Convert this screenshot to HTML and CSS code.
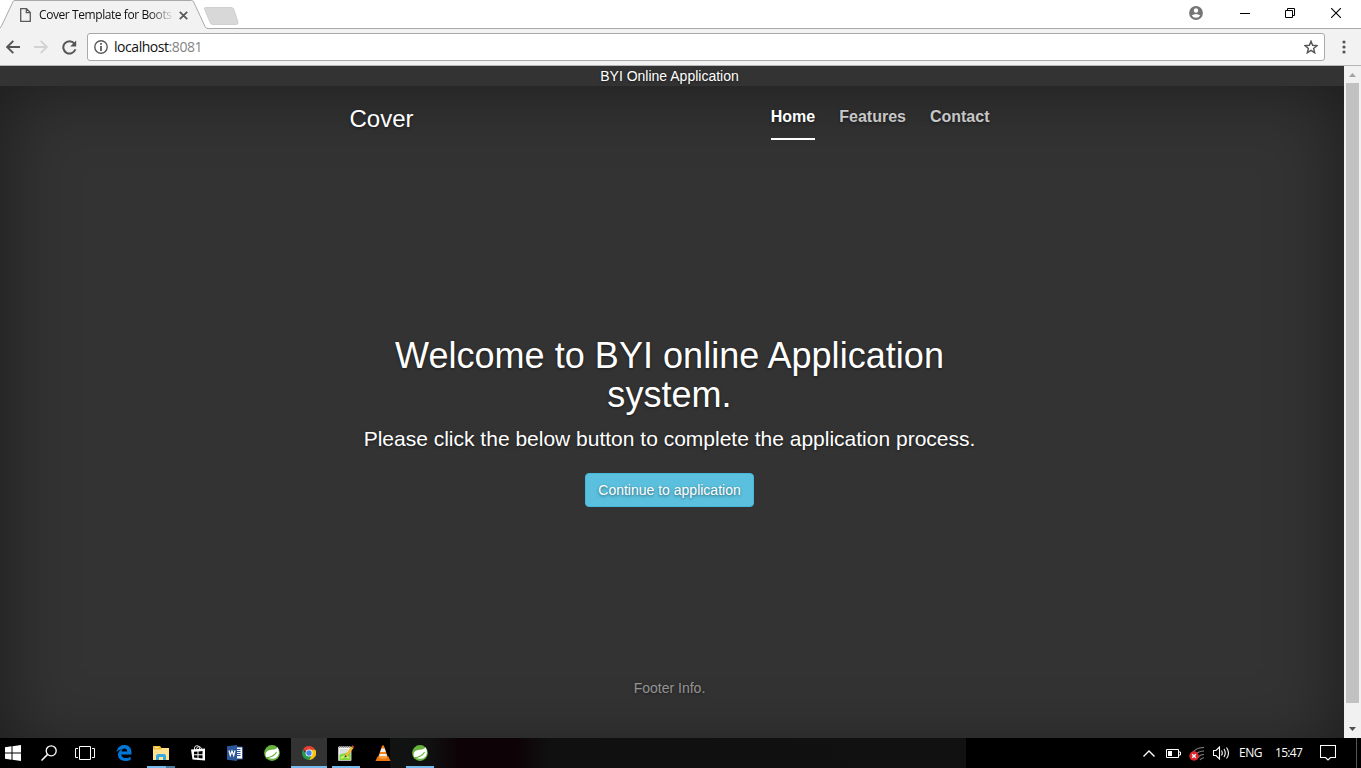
FILE: index.html
```html
<!DOCTYPE html>
<html lang="en">
<head>
<meta charset="utf-8">
<title>Cover Template for Bootstrap</title>
<link rel="stylesheet" href="styles.css">
</head>
<body>
<div class="screen">
  <header class="tabstrip">
    <svg class="tab-shapes" width="245" height="29" viewBox="0 0 245 29">
      <path d="M0 28.5 1.5 27 13 1.8Q13.4.5 15 .5H191.500Q193 .5 193.700 2L205 26.500Q206 28.500 208 28.500V29H0Z" fill="#f2f2f2"/>
      <path d="M0 28 1.500 26 13 1.800Q13.400.5 15 .5H191.500Q193 .5 193.700 2L205 26.500Q206 28.500 208 28.500H245" fill="none" stroke="#a9a9a9"/>
      <path d="M206 7.500H231Q233 7.500 233.700 9L238 22Q238.300 24.500 236.500 24.500H213Q211 24.500 210.300 23L204.500 9Q204 7.500 206 7.500Z" fill="#d8d8d8" stroke="#d0d0d0"/>
    </svg>
    <div class="tab">
      <svg class="doc" width="11" height="14" viewBox="0 0 11 14"><path d="M.7.700H6.500L10.300 4.500V13.300H.7ZM6.300.700V4.700H10.300" fill="none" stroke="#5a5a5a" stroke-width="1.300"/></svg>
      <span class="tab-title">Cover Template for Boots</span>
      <svg width="9" height="9" viewBox="0 0 9 9"><path d="M.8.800 8.200 8.200M8.200.800.800 8.200" stroke="#5a5a5a" stroke-width="1.800"/></svg>
    </div>
    <div class="window-buttons">
      <svg width="14" height="14" viewBox="0 0 14 14"><circle cx="7" cy="7" r="6.900" fill="#757575"/><circle cx="7" cy="4.500" r="2.200" fill="#fff"/><path d="M2.700 9.600Q4.600 7.900 7 7.900T11.300 9.600Q9.800 11.800 7 11.800T2.700 9.600Z" fill="#fff"/></svg>
      <svg class="minimize" width="10" height="10" viewBox="0 0 10 10"><path d="M0 5.500H10" stroke="#000"/></svg>
      <svg class="restore" width="10" height="10" viewBox="0 0 10 10"><path d="M.5 2.500H7.500V9.500H.5ZM2.500 2.500V.5H9.500V7.500H7.500" fill="none" stroke="#000"/></svg>
      <svg class="close" width="10" height="10" viewBox="0 0 10 10"><path d="M0 0 10 10M10 0 0 10" stroke="#000" stroke-width="1.100"/></svg>
    </div>
  </header>
  <div class="toolbar">
    <svg class="back" width="14" height="14" viewBox="0 0 14 14"><path d="M14 7H1.500M7.300.800 1.200 7 7.300 13.200" fill="none" stroke="#555" stroke-width="1.900"/></svg>
    <svg class="forward" width="14" height="14" viewBox="0 0 14 14"><path d="M0 7H12.500M6.700.800 12.800 7 6.700 13.200" fill="none" stroke="#d3d3d3" stroke-width="1.900"/></svg>
    <svg class="reload" width="15" height="15" viewBox="0 0 15 15"><path d="M12.300 3.400A6.200 6.200 0 1 0 13.400 9.300" fill="none" stroke="#555" stroke-width="2"/><path d="M14.200.5V6.500H8.200Z" fill="#555"/></svg>
    <div class="omnibox">
      <svg width="14" height="14" viewBox="0 0 14 14"><circle cx="7" cy="7" r="6.200" fill="none" stroke="#5a5a5a" stroke-width="1.400"/><path d="M7 3V4.800M7 6V11" stroke="#5a5a5a" stroke-width="1.800"/></svg>
      <span class="url">localhost<span class="port">:8081</span></span>
      <svg class="star" width="14" height="14" viewBox="0 0 14 14"><path d="M7 1.200 8.600 5.300 13 5.600 9.600 8.400 10.700 12.800 7 10.400 3.300 12.800 4.400 8.400 1 5.600 5.400 5.300Z" fill="none" stroke="#555" stroke-width="1.400"/></svg>
    </div>
    <svg class="menu" width="4" height="14" viewBox="0 0 4 14"><g fill="#555"><circle cx="2" cy="2" r="1.600"/><circle cx="2" cy="7" r="1.600"/><circle cx="2" cy="12" r="1.600"/></g></svg>
  </div>
  <div class="viewport">
    <main class="page">
      <div class="banner">BYI Online Application</div>
      <div class="site-wrapper">
        <div class="cover-container">
          <div class="masthead">
            <h3 class="brand">Cover</h3>
            <nav class="nav">
              <a class="nav-link active">Home</a>
              <a class="nav-link">Features</a>
              <a class="nav-link">Contact</a>
            </nav>
          </div>
          <section class="cover">
            <h1 class="cover-heading">Welcome to BYI online Application system.</h1>
            <p class="lead">Please click the below button to complete the application process.</p>
            <button class="btn">Continue to application</button>
          </section>
          <footer class="mastfoot">Footer Info.</footer>
        </div>
      </div>
    </main>
    <div class="scrollbar">
      <svg width="17" height="17" viewBox="0 0 17 17"><path d="M5 11 8.500 7 12 11Z" fill="#a3a3a3"/></svg>
      <div class="thumb"></div>
      <svg width="17" height="17" viewBox="0 0 17 17"><path d="M5 6H12L8.500 10Z" fill="#505050"/></svg>
    </div>
  </div>
  <footer class="taskbar">
    <div class="task start"><svg width="16" height="16" viewBox="0 0 16 16"><path d="M0 2.300 6.500 1.300V7.500H0ZM7.500 1.200 16 0V7.500H7.500ZM0 8.500H6.500V14.700L0 13.700ZM7.500 8.500H16V16L7.500 14.800Z" fill="#fff"/></svg></div>
    <div class="task"><svg width="16" height="16" viewBox="0 0 16 16"><circle cx="10.200" cy="5.800" r="5" fill="none" stroke="#fff" stroke-width="1.300"/><path d="M6.600 9.400.5 15.500" stroke="#fff" stroke-width="1.500"/></svg></div>
    <div class="task taskview"><svg width="20" height="14" viewBox="0 0 20 14"><path d="M4.500.5H15.500V13.500H4.500ZM3 2.500H.5V11.500H3M17 2.500H19.500V11.500H17" fill="none" stroke="#fff"/></svg></div>
    <div class="task app"><svg class="edge" width="16" height="16" viewBox="0 0 16 16"><path d="M.5 7.200C1.300 2.500 4.500 0 8.400 0 13 0 15.500 3.300 15.500 7.500V9.400H5.300C5.500 12 7.500 13 10 13 11.800 13 13.300 12.500 14.600 11.700V15C13.100 15.700 11.400 16 9.500 16 4.900 16 2 13.600 2 9.800 2 7.300 3.500 5.300 6 4.300 3.700 4.500 1.800 5.500.5 7.200ZM5.500 6.600H11.200C11.200 4.700 10.300 3.500 8.500 3.500 6.900 3.500 5.800 4.800 5.500 6.600Z" fill="#0078d7"/></svg></div>
    <div class="task app open stacked"><svg width="16" height="14" viewBox="0 0 16 14"><path d="M0 0H7L8.500 2H15.500V13H0Z" fill="#f5bb2f"/><path d="M0 3.500H8L9 2H16V14H0Z" fill="#ffe391"/><path d="M2 1.500H5.500" stroke="#fff0ba"/><path d="M3 14V9.500L4.500 8H11.500L13 9.500V14H10V11H6V14Z" fill="#36a9e1"/></svg></div>
    <div class="task app"><svg width="15" height="16" viewBox="0 0 15 16"><path d="M3.500 5.500V3Q3.500.7 6 .7T8.500 3V4M5.500 4Q6 1.500 8 1.500T10.500 4" fill="none" stroke="#ddd"/><path d="M0 4.500 14 3.500V15.500L1.500 14.500Z" fill="#fff"/><path d="M3 6.800 6.500 6.500V9.200H3ZM7.500 6.400 11.500 6V9.200H7.500ZM3 10.200H6.500V12.900L3 12.600ZM7.500 10.200H11.500V13.400L7.500 13Z" fill="#000"/></svg></div>
    <div class="task app"><svg width="16" height="16" viewBox="0 0 16 16"><path d="M9 2H15.500V14H9Z" fill="#fff" stroke="#2b579a"/><path d="M10 4.500H13.500M10 6.500H13.500M10 8.500H13.500M10 10.500H13.500" stroke="#2b579a"/><path d="M0 1.200 10 0V16L0 14.800Z" fill="#2b579a"/><path d="M2 5.500 3.300 10.500 5 6 6.700 10.500 8 5.500" fill="none" stroke="#fff" stroke-width="1.200"/></svg></div>
    <div class="task app"><svg width="16" height="16" viewBox="0 0 16 16"><circle cx="8" cy="8" r="7.900" fill="#68b33e"/><path d="M2 12C.5 7 3.500 5.200 7.500 4.800 10.800 4.500 12.600 4 13.700 2.200 16.500 8.500 14 13.300 9 13.700 6 14 4.200 13 2 12Z" fill="#fff"/><path d="M1.800 12.900C7 12.300 10.500 10.700 12.600 6.900" fill="none" stroke="#68b33e" stroke-width="1.100"/></svg></div>
    <div class="task app open current"><svg width="14" height="14" viewBox="0 0 16 16"><path d="M8 8 1.100 4A8 8 0 0 1 15 4.200L8 4.500Z" fill="#e34133"/><path d="M8 8 15 4.200A8 8 0 0 1 8 16L11.200 9Z" fill="#fbc116"/><path d="M8 8 11.300 10 8 16A8 8 0 0 1 1.100 4L4.800 9.800Z" fill="#269b50"/><path d="M8 4.200H15A8 8 0 0 1 15 12L11 8Z" fill="#fbc116"/><circle cx="8" cy="8" r="4" fill="#fff"/><circle cx="8" cy="8" r="3.100" fill="#4285e8"/></svg></div>
    <div class="task app open"><svg width="16" height="16" viewBox="0 0 16 16"><path d="M.5 2H13V15.500H.5Z" fill="#f4f4ec" stroke="#bbb"/><path d="M1.500 1V3M3.500 1V3M5.500 1V3M7.500 1V3M9.500 1V3M11.500 1V3" stroke="#999"/><path d="M2 5H10M2 7H9M2 9H8" stroke="#bcc8d0"/><path d="M1.500 15V9.500L12.500 7V15Z" fill="#80d53b"/><path d="M3 13.500Q6 9.500 11 13" fill="none" stroke="#c6f36b" stroke-width="2"/><path d="M7 10 13.500 1.500 15.500 3 9 11.500Z" fill="#f4b82c"/><path d="M13.500 1.500 14.500.3 16 1.500 15.500 3Z" fill="#d94c37"/><path d="M7 10 6.500 12.500 9 11.500Z" fill="#45382a"/></svg></div>
    <div class="task app"><svg width="16" height="16" viewBox="0 0 16 16"><path d="M7.200.5H8.800L13.500 14H2.500Z" fill="#f58112"/><path d="M6.300 3.500H9.700L10.800 7H5.200ZM4.700 9H11.300L12.300 11.500H3.800Z" fill="#eee"/><path d="M2.500 11.500H13.500L15.500 16H.5Z" fill="#eb7511"/><path d="M4 11.500H12V13Q8 14 4 13Z" fill="#ffa43c"/></svg></div>
    <div class="task app open"><svg width="16" height="16" viewBox="0 0 16 16"><circle cx="8" cy="8" r="7.900" fill="#68b33e"/><path d="M2 12C.5 7 3.500 5.200 7.500 4.800 10.800 4.500 12.600 4 13.700 2.200 16.500 8.500 14 13.300 9 13.700 6 14 4.200 13 2 12Z" fill="#fff"/><path d="M1.800 12.900C7 12.300 10.500 10.700 12.600 6.900" fill="none" stroke="#68b33e" stroke-width="1.100"/></svg></div>
    <div class="tray">
      <svg class="chevron" width="12" height="7" viewBox="0 0 12 7"><path d="M.5 6.500 6 1 11.500 6.500" fill="none" stroke="#fff" stroke-width="1.400"/></svg>
      <svg class="battery" width="15" height="9" viewBox="0 0 15 9"><path d="M.5.500H12.500V8.500H.5ZM13 3H14.500V6H13" fill="none" stroke="#fff"/><path d="M2 2H6V7H2Z" fill="#fff"/></svg>
      <svg class="wifi" width="16" height="15" viewBox="0 0 16 15"><g fill="none" stroke="#858585" stroke-width="1.100"><path d="M2 9A14 14 0 0 1 15 1.500M5 11A11 11 0 0 1 15 5M8 13A8 8 0 0 1 15 8.500M11 14A5 5 0 0 1 15 11.700"/></g><circle cx="5" cy="10" r="4.700" fill="#dc2732"/><path d="M3.200 8.200 6.800 11.800M6.800 8.200 3.200 11.800" stroke="#fff" stroke-width="1.300"/></svg>
      <svg class="volume" width="17" height="14" viewBox="0 0 17 14"><path d="M.5 4.500H3L6.500 1V13L3 9.500H.5ZM8.500 4.500Q10 7 8.500 9.500M11 3Q13.500 7 11 11M13.500 1.500Q17.500 7 13.500 12.500" fill="none" stroke="#fff" stroke-width="1.100"/></svg>
      <span class="lang">ENG</span>
      <span class="clock">15:47</span>
      <svg class="notice" width="16" height="16" viewBox="0 0 16 16"><path d="M.5.500H15.500V12.500H10.500L8 15 5.500 12.500H.5Z" fill="none" stroke="#fff" stroke-width="1.100"/></svg>
      <div class="show-desktop"></div>
    </div>
  </footer>
</div>
</body>
</html>
```
FILE: styles.css
```css
* { box-sizing: border-box; }
body { margin: 0; font-family: "Liberation Sans", Arial, sans-serif; }
svg { display: block; flex: none; }
.screen { width: 1361px; height: 768px; display: flex; flex-direction: column; overflow: hidden; background: #fff; }

.tabstrip { position: relative; flex: none; height: 29px; display: flex; justify-content: space-between; border-bottom: 1px solid #a9a9a9; }
.tab-shapes { position: absolute; left: 0; top: 0; }
.tab { position: relative; display: flex; align-items: center; padding: 2px 0 0 20px; height: 28px; }
.tab-title { width: 133px; margin: 0 7px 0 8px; white-space: nowrap; font: 12px/16px "Open Sans", sans-serif; letter-spacing: -0.42px; color: #111; mask-image: linear-gradient(to right, #000 110px, transparent 136px); }
.window-buttons { display: flex; align-items: center; height: 26px; padding-right: 20px; }
.minimize { margin-left: 37px; }
.restore { margin-left: 35px; }
.close { margin-left: 36px; }

.toolbar { flex: none; height: 37px; display: flex; align-items: center; padding-left: 6px; background: #f2f2f2; border-bottom: 1px solid #b6b6b6; }
.forward { margin-left: 14px; }
.reload { margin-left: 14px; }
.omnibox { display: flex; align-items: center; width: 1238px; height: 28px; margin-left: 10px; padding: 0 6px; background: #fff; border: 1px solid #a9a9a9; border-radius: 3px; }
.url { margin-left: 6px; font: 14px/20px "Open Sans", sans-serif; letter-spacing: -0.45px; color: #111; }
.port { color: #858585; }
.star { margin-left: auto; }
.menu { margin-left: 17px; }

.viewport { flex: none; height: 672px; display: flex; overflow: hidden; }
.page { width: 1344px; height: 672px; overflow: hidden; background: #333; color: #fff; text-align: center; text-shadow: 0 1px 3px rgba(0, 0, 0, .5); }
.banner { height: 20px; padding-right: 5px; font-size: 14px; line-height: 20px; }
.site-wrapper { height: 672px; padding-right: 5px; box-shadow: inset 0 0 75px rgba(0, 0, 0, .47); }
.cover-container { display: flex; flex-direction: column; width: 700px; height: 652px; margin: 0 auto; }
.masthead { display: flex; justify-content: space-between; height: 54px; padding: 0 30px; }
.brand { margin: 20px 0 0; font-size: 24px; line-height: 26px; font-weight: 400; }
.nav { display: flex; gap: 24px; }
.nav-link { padding-top: 21px; font-size: 16px; line-height: 20px; font-weight: 700; color: rgba(255, 255, 255, .75); }
.nav-link.active { color: #fff; border-bottom: 2px solid #fff; }
.cover { padding: 196px 20px 0; }
.cover-heading { margin: 0 0 10px; font-size: 36px; line-height: 39px; font-weight: 400; letter-spacing: 0.04px; }
.lead { margin: 0 0 20px; font-size: 21px; line-height: 29px; }
.btn { display: block; width: 169px; height: 34px; margin: 0 auto; padding: 0; font: 14px/20px "Liberation Sans", Arial, sans-serif; color: #fff; text-shadow: inherit; background: #5bc0de; border: 1px solid #46b8da; border-radius: 4px; }
.mastfoot { margin-top: auto; padding-bottom: 40px; font-size: 14px; line-height: 20px; color: rgba(255, 255, 255, .5); }
.scrollbar { display: flex; flex-direction: column; align-items: center; width: 17px; background: #f1f1f1; }
.thumb { width: 13px; height: 620px; margin-bottom: auto; background: #c1c1c1; }

.taskbar { flex: none; height: 30px; display: flex; background: linear-gradient(to right, #000 390px, #111312 390px, #101011 430px, #0d0206 460px, #0d0206 515px, #101010 550px, #111 966px, #000 966px); }
.task { display: flex; align-items: center; justify-content: center; width: 36px; height: 30px; flex: none; }
.start { width: 31px; padding-right: 5px; }
.taskview { margin-right: 3px; }
.edge { margin-right: 1px; }
.app { margin-right: 1px; }
.open { background: linear-gradient(#76b9ed, #76b9ed) 4px 28px / 28px 2px no-repeat; }
.stacked { background: linear-gradient(to right, #76b9ed 19px, #4c7b9f 19px) 4px 28px / 28px 2px no-repeat; }
.current { background: linear-gradient(#76b9ed, #76b9ed) 0 28px / 36px 2px no-repeat #333; }
.tray { display: flex; align-items: center; margin-left: auto; color: #fff; font: 12px/16px "Open Sans", sans-serif; }
.battery { margin-left: 11px; }
.wifi { margin-left: 8px; }
.volume { margin-left: 8px; }
.lang { width: 24px; margin-left: 9px; letter-spacing: -0.5px; }
.clock { width: 29px; margin-left: 12px; letter-spacing: -0.7px; }
.notice { margin-left: 16px; }
.show-desktop { width: 5px; height: 30px; margin-left: 20px; border-left: 1px solid #555; }
```
